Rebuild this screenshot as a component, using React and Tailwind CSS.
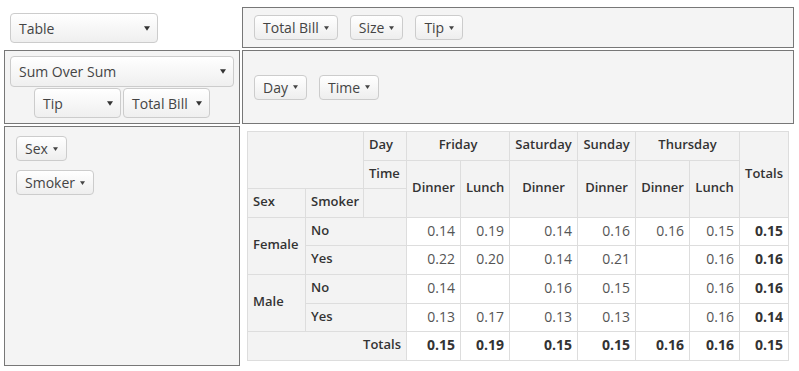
import React from 'react';

const Arrow = () => (
  <svg width="6" height="5" viewBox="0 0 8 6" className="shrink-0">
    <path d="M0 0h8L4 6z" fill="#333" />
  </svg>
);

function Dropdown({ label, className = '' }) {
  return (
    <div className={`flex items-center justify-between pl-[8px] pr-[7px] border border-[#cccccc] rounded-[4px] bg-linear-to-b from-white to-[#efefef] text-[14px] text-[#444] ${className}`}>
      <span>{label}</span>
      <Arrow />
    </div>
  );
}

function Pill({ label }) {
  return (
    <div className="inline-flex items-center h-[25px] px-[8px] border border-[#cccccc] rounded-[4px] bg-linear-to-b from-white to-[#eeeeee] text-[14px] text-[#444] whitespace-nowrap">
      {label}
      <svg width="5" height="4" viewBox="0 0 8 6" className="ml-[5px] shrink-0">
        <path d="M0 0h8L4 6z" fill="#444" />
      </svg>
    </div>
  );
}

const th = 'bg-[#f3f3f3] border border-[#dddddd] px-[5px] pt-[4px] pb-[6px] leading-[17.6px] text-[13px] font-semibold text-[#333] align-middle';
const td = 'bg-white border border-[#dddddd] px-[5px] pt-[4px] pb-[6px] leading-[17.6px] text-[14px] text-right text-[#555] align-middle';
const tot = 'bg-white border border-[#dddddd] px-[5px] pt-[4px] pb-[6px] leading-[17.6px] text-[14px] text-right font-bold text-[#333] align-middle';

const rows = [
  { sex: 'Female', smoker: 'No', vals: ['0.14', '0.19', '0.14', '0.16', '0.16', '0.15'], total: '0.15' },
  { sex: null, smoker: 'Yes', vals: ['0.22', '0.20', '0.14', '0.21', '', '0.16'], total: '0.16' },
  { sex: 'Male', smoker: 'No', vals: ['0.14', '', '0.16', '0.15', '', '0.16'], total: '0.16' },
  { sex: null, smoker: 'Yes', vals: ['0.13', '0.17', '0.13', '0.13', '', '0.16'], total: '0.14' },
];
const colTotals = ['0.15', '0.19', '0.15', '0.15', '0.16', '0.16'];

function PivotTable() {
  return (
    <table className="border-collapse table-fixed w-[541px] text-[13px]">
      <colgroup>
        <col className="w-[58px]" />
        <col className="w-[58px]" />
        <col className="w-[43px]" />
        <col className="w-[54px]" />
        <col className="w-[49px]" />
        <col className="w-[68px]" />
        <col className="w-[58px]" />
        <col className="w-[54px]" />
        <col className="w-[50px]" />
        <col className="w-[49px]" />
      </colgroup>
      <thead>
        <tr>
          <th className={th} colSpan={2} rowSpan={2}></th>
          <th className={`${th} text-left`}>Day</th>
          <th className={`${th} text-center`} colSpan={2}>Friday</th>
          <th className={`${th} text-center`}>Saturday</th>
          <th className={`${th} text-center`}>Sunday</th>
          <th className={`${th} text-center`} colSpan={2}>Thursday</th>
          <th className={`${th} text-center`} rowSpan={3}>Totals</th>
        </tr>
        <tr>
          <th className={`${th} text-left`}>Time</th>
          <th className={`${th} text-center`} rowSpan={2}>Dinner</th>
          <th className={`${th} text-center`} rowSpan={2}>Lunch</th>
          <th className={`${th} text-center`} rowSpan={2}>Dinner</th>
          <th className={`${th} text-center`} rowSpan={2}>Dinner</th>
          <th className={`${th} text-center`} rowSpan={2}>Dinner</th>
          <th className={`${th} text-center`} rowSpan={2}>Lunch</th>
        </tr>
        <tr>
          <th className={`${th} text-left`}>Sex</th>
          <th className={`${th} text-left`}>Smoker</th>
          <th className={th}></th>
        </tr>
      </thead>
      <tbody>
        {rows.map((r, i) => (
          <tr key={i}>
            {r.sex && (
              <th className={`${th} text-left`} rowSpan={2}>{r.sex}</th>
            )}
            <th className={`${th} text-left`} colSpan={2}>{r.smoker}</th>
            {r.vals.map((v, j) => (
              <td key={j} className={td}>{v}</td>
            ))}
            <td className={tot}>{r.total}</td>
          </tr>
        ))}
        <tr>
          <th className={`${th} text-right`} colSpan={3}>Totals</th>
          {colTotals.map((v, j) => (
            <td key={j} className={tot}>{v}</td>
          ))}
          <td className={tot}>0.15</td>
        </tr>
      </tbody>
    </table>
  );
}

export default function App() {
  return (
    <div className="pt-[7px] pl-[4px] font-['Open_Sans',sans-serif] bg-white min-h-[371px]">
      <div className="grid grid-cols-[236px_552px] grid-rows-[41px_74px_240px] gap-[2px]">
        <div className="pt-[6px] pl-[6px]">
          <Dropdown label="Table" className="w-[148px] h-[30px]" />
        </div>
        <div className="border border-[#777] bg-[#f4f4f4] flex items-center gap-[12px] pl-[11px]">
          <Pill label="Total Bill" />
          <Pill label="Size" />
          <Pill label="Tip" />
        </div>

        <div className="border border-[#777] bg-[#f4f4f4] px-[5px] pt-[5px] flex flex-col items-center">
          <Dropdown label="Sum Over Sum" className="w-full h-[31px]" />
          <div className="flex gap-[2px] mt-[1px]">
            <Dropdown label="Tip" className="w-[87px] h-[30px]" />
            <Dropdown label="Total Bill" className="w-[87px] h-[30px]" />
          </div>
        </div>
        <div className="border border-[#777] bg-[#f4f4f4] flex items-center gap-[12px] pl-[11px]">
          <Pill label="Day" />
          <Pill label="Time" />
        </div>

        <div className="border border-[#777] bg-[#f4f4f4] flex flex-col items-start gap-[9px] pt-[9px] pl-[11px]">
          <Pill label="Sex" />
          <Pill label="Smoker" />
        </div>
        <div className="pt-[5px] pl-[5px]">
          <PivotTable />
        </div>
      </div>
    </div>
  );
}
